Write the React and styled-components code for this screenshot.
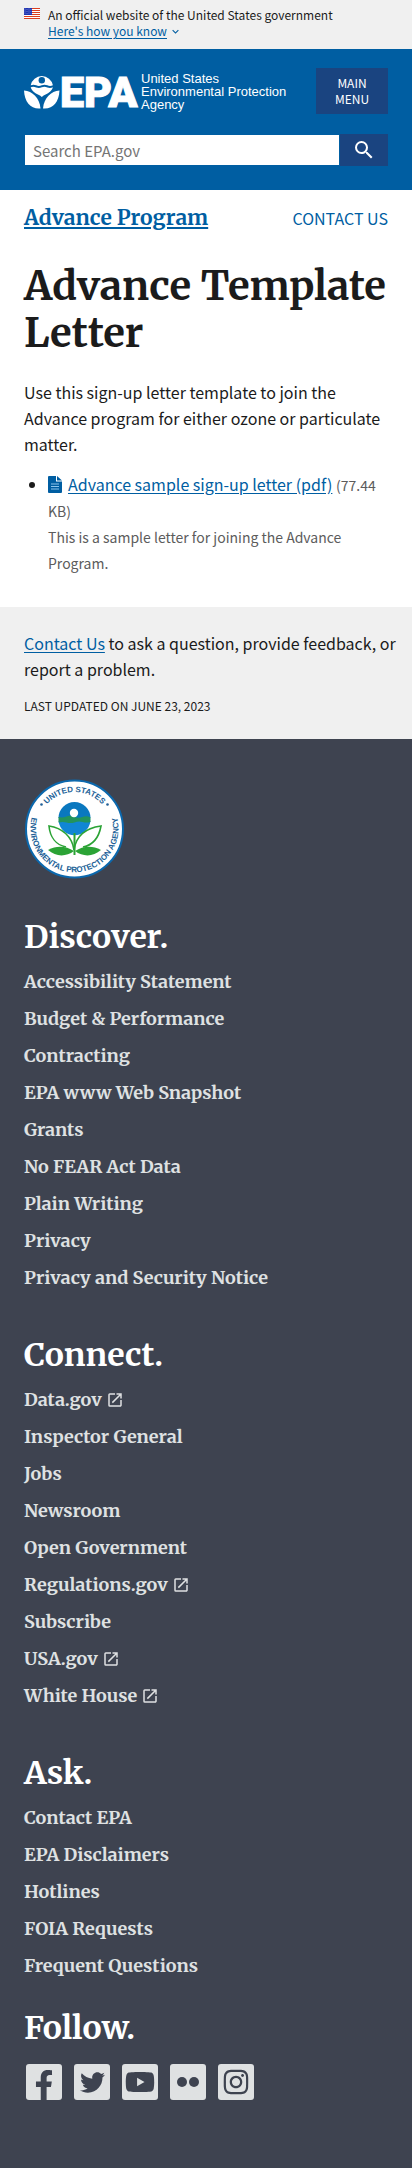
import React from "react";
import styled, { createGlobalStyle } from "styled-components";
import { FaFacebookF, FaTwitter, FaYoutube, FaInstagram } from "react-icons/fa";
import { MdSearch, MdExpandMore, MdOpenInNew } from "react-icons/md";

const sans = `"Source Sans Pro", "Noto Sans CJK SC", "Open Sans", sans-serif`;
const serif = `"Merriweather", "DejaVu Serif Condensed", "DejaVu Serif", serif`;

const GlobalStyle = createGlobalStyle`
  *, *::before, *::after { box-sizing: border-box; }
  body {
    margin: 0;
    background: #3e4350;
    color: #1b1b1b;
    font-family: ${sans};
    font-size: 16px;
    line-height: 26px;
  }
  h1, h2, p, ul { margin: 0; padding: 0; }
  a { color: #005ea2; text-underline-offset: 2px; }
  button, input { font-family: inherit; border: 0; border-radius: 0; }
`;

const Page = styled.div`
  background: #fff;
`;

const Banner = styled.section`
  display: flex;
  gap: 8px;
  padding: 7px 24px 10px;
  background: #f0f0f0;
  font-size: 12px;
  line-height: 16px;
`;

const Flag = styled.svg`
  flex: none;
  width: 16px;
  height: 11px;
  margin-top: 1px;
`;

const BannerToggle = styled.button`
  display: flex;
  align-items: center;
  gap: 2px;
  padding: 0;
  background: none;
  color: #005ea2;
  font-size: 12px;
  line-height: 16px;
  cursor: pointer;
  span { text-decoration: underline; text-underline-offset: 2px; }
`;

const Header = styled.header`
  display: flex;
  flex-direction: column;
  gap: 20px;
  padding: 19px 24px 24px;
  background: #005ea2;
`;

const HeaderTop = styled.div`
  display: flex;
  align-items: center;
  justify-content: space-between;
`;

const LogoLink = styled.a`
  display: flex;
  align-items: center;
  gap: 2px;
  color: #fff;
  text-decoration: none;
`;

const LogoMark = styled.svg`
  flex: none;
  width: 115px;
  height: 38px;
  overflow: visible;
`;

const LogoName = styled.span`
  font: 13px/13px "Liberation Sans", sans-serif;
  white-space: nowrap;
`;

const MenuButton = styled.button`
  width: 72px;
  padding: 7px 12px;
  background: #1a4480;
  color: #fff;
  font-size: 12px;
  line-height: 16px;
  text-transform: uppercase;
  cursor: pointer;
`;

const SearchForm = styled.form`
  display: flex;
  height: 32px;
`;

const SearchInput = styled.input`
  flex: 1;
  min-width: 0;
  padding: 0 8px;
  border: 1px solid #005ea2;
  background: #fff;
  font-size: 15px;
  &::placeholder { color: #757575; opacity: 1; }
`;

const SearchButton = styled.button`
  display: flex;
  align-items: center;
  justify-content: center;
  width: 48px;
  padding: 0;
  background: #1a4480;
  color: #fff;
  cursor: pointer;
`;

const SiteBar = styled.nav`
  display: flex;
  align-items: center;
  justify-content: space-between;
  padding: 14px 24px 0;
`;

const SiteName = styled.a`
  font: 700 21px/28px ${serif};
  text-decoration-thickness: 2px;
`;

const ContactLink = styled.a`
  text-decoration: none;
  text-transform: uppercase;
`;

const Main = styled.main`
  padding: 31px 24px 31px;
`;

const Title = styled.h1`
  margin-bottom: 22px;
  font: 700 40px/47px ${serif};
`;

const FileList = styled.ul`
  margin-top: 15px;
  padding-left: 24px;
  line-height: 25px;
`;

const FileIcon = styled.svg`
  width: 14px;
  height: 17px;
  margin-right: 6px;
  vertical-align: -2px;
`;

const FileNote = styled.span`
  color: #5c5c5c;
  font-size: 14px;
`;

const Feedback = styled.section`
  padding: 23px 16px 20px 24px;
  background: #f0f0f0;
`;

const Updated = styled.p`
  margin-top: 11px;
  font-size: 12px;
  text-transform: uppercase;
`;

const Footer = styled.footer`
  padding: 40px 24px 67px;
  background: #3e4350;
`;

const Seal = styled.svg`
  display: block;
  width: 100px;
  height: 100px;
`;

const FooterGroup = styled.section`
  margin-top: ${(p) => p.$gap}px;
`;

const FooterTitle = styled.h2`
  color: #fff;
  font: 700 32px/40px ${serif};
`;

const FooterLinks = styled.ul`
  margin-top: 6px;
  list-style: none;
`;

const FooterItem = styled.li`
  font: 700 18px/37px ${serif};
`;

const FooterLink = styled.a`
  display: inline-flex;
  align-items: center;
  gap: 4px;
  color: #dfe1e2;
  text-decoration: none;
`;

const SocialRow = styled.div`
  display: flex;
  gap: 12px;
  margin-top: 16px;
  padding-left: 2px;
`;

const SocialLink = styled.a`
  display: flex;
  align-items: ${(p) => (p.$bottom ? "flex-end" : "center")};
  justify-content: center;
  width: 36px;
  height: 36px;
  overflow: hidden;
  border-radius: 3px;
  background: #dfe1e2;
  color: #3e4350;
`;

const discover = [
  "Accessibility Statement", "Budget & Performance", "Contracting", "EPA www Web Snapshot",
  "Grants", "No FEAR Act Data", "Plain Writing", "Privacy", "Privacy and Security Notice",
].map((label) => ({ label }));

const connect = [
  { label: "Data.gov", external: true },
  { label: "Inspector General" },
  { label: "Jobs" },
  { label: "Newsroom" },
  { label: "Open Government" },
  { label: "Regulations.gov", external: true },
  { label: "Subscribe" },
  { label: "USA.gov", external: true },
  { label: "White House", external: true },
];

const ask = ["Contact EPA", "EPA Disclaimers", "Hotlines", "FOIA Requests", "Frequent Questions"].map(
  (label) => ({ label })
);

function FlagIcon() {
  return (
    <Flag viewBox="0 0 16 11" aria-hidden="true">
      <rect width="16" height="11" fill="#fff" />
      {[0, 2, 4, 6, 8, 10].map((y) => (
        <rect key={y} y={y} width="16" height="1" fill="#db3e1f" />
      ))}
      <rect width="8" height="7" fill="#1e33b1" />
      {[1, 3, 5].map((y) =>
        [1, 3, 5, 7].map((x) => <circle key={`${x}-${y}`} cx={x} cy={y + (x % 4 === 1 ? 0 : 0.7)} r="0.4" fill="#fff" />)
      )}
    </Flag>
  );
}

function EpaMark() {
  return (
    <LogoMark viewBox="0 0 115 38" aria-hidden="true" fill="#fff">
      <path d="M6.700 13.300a11.300 11.300 0 0 1 22.200 0q-2.800 1.200-5.600 0-2.800-1-5.600 0-2.800 1.200-5.500 0-2.800-1-5.500 0Z" />
      <circle cx="17.800" cy="8.300" r="3.200" fill="#005ea2" />
      <path d="M6.700 15.300q2.700-1 5.500.2 2.800 1 5.600-.2 2.800-1 5.600.2 2.800 1 5.500-.2c-1.200 4-5.200 6.700-9.300 8.200L17.800 25l-1.800-1.500C11.900 22 7.900 19.300 6.700 15.300Z" />
      <path d="M0 18.500c8.500.8 15.500 7 16.500 18C7 37.500.6 30.500 0 18.500Z" />
      <path d="M35.500 18.500c-8.500.8-15.500 7-16.500 18 9.500 1 15.900-6 16.500-18Z" />
      <text x="36" y="35" fontFamily="Roboto, sans-serif" fontWeight="900" fontSize="43" stroke="#fff" strokeWidth="1">EPA</text>
    </LogoMark>
  );
}

function EpaSeal() {
  const lettering = { fontFamily: "'Liberation Sans', sans-serif", fontWeight: 700, fill: "#215f97" };
  return (
    <Seal viewBox="0 0 100 100" role="img" aria-label="United States Environmental Protection Agency seal">
      <defs>
        <path id="seal-top" d="M13.500 50a37 37 0 0 1 74 0" />
        <path id="seal-bottom" d="M8.900 35A44 44 0 1 0 92.100 35" />
      </defs>
      <circle cx="50.500" cy="50" r="48.500" fill="#fff" stroke="#0b68ad" strokeWidth="2" />
      <text {...lettering} fontSize="8" textAnchor="middle">
        <textPath href="#seal-top" startOffset="50%">UNITED STATES</textPath>
      </text>
      <text {...lettering} fontSize="8" textAnchor="middle">
        <textPath href="#seal-bottom" startOffset="50%">ENVIRONMENTAL PROTECTION AGENCY</textPath>
      </text>
      <circle cx="17.500" cy="25.500" r="1.300" fill="#215f97" />
      <circle cx="83.500" cy="25.500" r="1.300" fill="#215f97" />
      <path d="M34.500 39a16 16 0 0 1 32 0Z" fill="#0a78bf" />
      <path d="M34.600 42a16 16 0 0 0 31.800 0Z" fill="#1086d4" />
      <path d="M34.500 38q4 1 8-.5 4-1.500 8 .5 4 1.500 8 0 4-1.500 8 .5v4.500q-4 1-8 0-4-1-8 .5-4 1-8 0-4-1-8 0Z" fill="#22935d" />
      <circle cx="50" cy="34" r="4.200" fill="#fff" />
      <g fill="none" stroke="#2ba335" strokeWidth="1.600">
        <path d="M50 71C48 57 38 49 25 47c1 11 7 19 17 21" />
        <path d="M50 71c2-14 12-22 27-24-2 11-8 19-18 21" />
        <path d="M50.500 54v22" strokeWidth="2" />
      </g>
      <path d="M24 71c9-5 18-4 26 1-8 6-18 6-26-1Z" fill="#2ba335" />
      <path d="M77 71c-9-5-18-4-26 1 8 6 18 6 26-1Z" fill="#2ba335" />
    </Seal>
  );
}

function LinkGroup({ title, items, gap }) {
  return (
    <FooterGroup $gap={gap}>
      <FooterTitle>{title}</FooterTitle>
      <FooterLinks>
        {items.map(({ label, external }) => (
          <FooterItem key={label}>
            <FooterLink href="#">
              {label}
              {external && <MdOpenInNew size={18} aria-hidden="true" />}
            </FooterLink>
          </FooterItem>
        ))}
      </FooterLinks>
    </FooterGroup>
  );
}

export default function App() {
  return (
    <Page>
      <GlobalStyle />
      <Banner aria-label="Official government website">
        <FlagIcon />
        <div>
          <p>An official website of the United States government</p>
          <BannerToggle type="button">
            <span>Here's how you know</span>
            <MdExpandMore size={13} aria-hidden="true" />
          </BannerToggle>
        </div>
      </Banner>

      <Header>
        <HeaderTop>
          <LogoLink href="#" aria-label="United States Environmental Protection Agency home">
            <EpaMark />
            <LogoName>
              United States<br />Environmental Protection<br />Agency
            </LogoName>
          </LogoLink>
          <MenuButton type="button">Main Menu</MenuButton>
        </HeaderTop>
        <SearchForm role="search" onSubmit={(e) => e.preventDefault()}>
          <SearchInput type="search" aria-label="Search EPA.gov" placeholder="Search EPA.gov" />
          <SearchButton type="submit" aria-label="Search">
            <MdSearch size={24} aria-hidden="true" />
          </SearchButton>
        </SearchForm>
      </Header>

      <SiteBar>
        <SiteName href="#">Advance Program</SiteName>
        <ContactLink href="#">Contact Us</ContactLink>
      </SiteBar>

      <Main>
        <Title>Advance Template Letter</Title>
        <p>Use this sign-up letter template to join the Advance program for either ozone or particulate matter.</p>
        <FileList>
          <li>
            <FileIcon viewBox="0 0 14 17" aria-hidden="true">
              <path d="M1 0h7v5.500h6V16a1 1 0 0 1-1 1H1a1 1 0 0 1-1-1V1a1 1 0 0 1 1-1Z" fill="#005ea2" />
              <path d="M9 0l5 4.500H9Z" fill="#005ea2" />
              <path d="M3 8h8M3 10.500h8M3 13h8" stroke="#8cc4ec" strokeWidth="1" />
            </FileIcon>
            <a href="#">Advance sample sign-up letter (pdf)</a>{" "}
            <FileNote>
              (77.44 KB)<br />This is a sample letter for joining the Advance Program.
            </FileNote>
          </li>
        </FileList>
      </Main>

      <Feedback>
        <p><a href="#">Contact Us</a> to ask a question, provide feedback, or report a problem.</p>
        <Updated>Last updated on June 23, 2023</Updated>
      </Feedback>

      <Footer>
        <EpaSeal />
        <LinkGroup title="Discover." items={discover} gap={38} />
        <LinkGroup title="Connect." items={connect} gap={39} />
        <LinkGroup title="Ask." items={ask} gap={39} />
        <FooterGroup $gap={24}>
          <FooterTitle>Follow.</FooterTitle>
          <SocialRow>
            <SocialLink href="#" aria-label="Facebook" $bottom><FaFacebookF size={30} /></SocialLink>
            <SocialLink href="#" aria-label="Twitter"><FaTwitter size={25} /></SocialLink>
            <SocialLink href="#" aria-label="YouTube"><FaYoutube size={30} /></SocialLink>
            <SocialLink href="#" aria-label="Flickr">
              <svg width="24" height="12" viewBox="0 0 24 12" fill="currentColor" aria-hidden="true">
                <circle cx="6" cy="6" r="5" />
                <circle cx="18" cy="6" r="5" />
              </svg>
            </SocialLink>
            <SocialLink href="#" aria-label="Instagram"><FaInstagram size={28} /></SocialLink>
          </SocialRow>
        </FooterGroup>
      </Footer>
    </Page>
  );
}
